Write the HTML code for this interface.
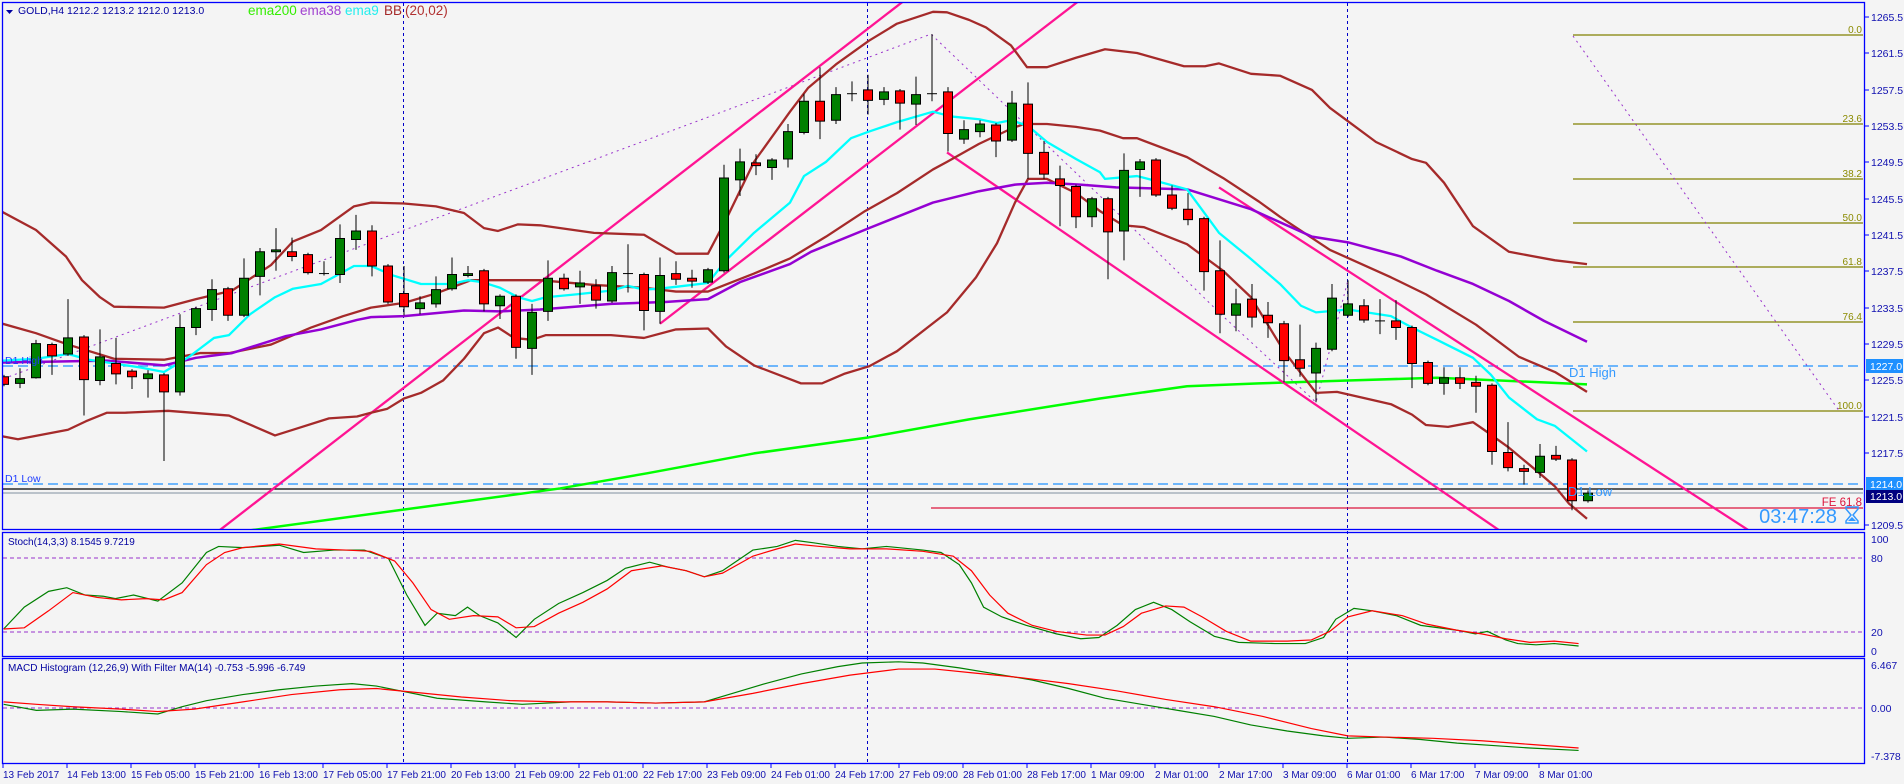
<!DOCTYPE html>
<html><head><meta charset="utf-8"><style>
html,body{margin:0;padding:0;background:#f4f4f4;}
svg{display:block;font-family:"Liberation Sans",sans-serif;}
</style></head><body>
<svg width="1904" height="784" viewBox="0 0 1904 784" xmlns="http://www.w3.org/2000/svg">
<defs>
<clipPath id="cm"><rect x="3" y="3" width="1860" height="526"/></clipPath>
<clipPath id="cs"><rect x="3" y="533" width="1860" height="122"/></clipPath>
<clipPath id="cd"><rect x="3" y="659" width="1860" height="103"/></clipPath>
</defs>
<rect width="1904" height="784" fill="#f4f4f4"/>

<!-- vertical dashed lines -->
<g stroke="#0000c8" stroke-width="1" stroke-dasharray="3,3">
<line x1="403.5" y1="3" x2="403.5" y2="763"/>
<line x1="867.5" y1="3" x2="867.5" y2="763"/>
<line x1="1347.5" y1="3" x2="1347.5" y2="763"/>
</g>

<g clip-path="url(#cm)">
<!-- fib levels -->
<g stroke="#808000" stroke-width="1.3">
<line x1="1573" y1="35" x2="1864" y2="35"/>
<line x1="1573" y1="124" x2="1864" y2="124"/>
<line x1="1573" y1="179" x2="1864" y2="179"/>
<line x1="1573" y1="223" x2="1864" y2="223"/>
<line x1="1573" y1="267" x2="1864" y2="267"/>
<line x1="1573" y1="322" x2="1864" y2="322"/>
<line x1="1573" y1="411" x2="1864" y2="411"/>
</g>
<g fill="#8b8b00" font-size="10" text-anchor="end">
<text x="1862" y="33">0.0</text><text x="1862" y="122">23.6</text><text x="1862" y="177">38.2</text>
<text x="1862" y="221">50.0</text><text x="1862" y="265">61.8</text><text x="1862" y="320">76.4</text><text x="1862" y="409">100.0</text>
</g>
<line x1="1573" y1="36" x2="1840" y2="412" stroke="#9932cc" stroke-width="1" stroke-dasharray="2,4"/>

<!-- horizontal lines -->
<line x1="3" y1="366" x2="1864" y2="366" stroke="#1e90ff" stroke-width="1.3" stroke-dasharray="10,5"/>
<line x1="3" y1="484" x2="1864" y2="484" stroke="#1e90ff" stroke-width="1.3" stroke-dasharray="10,5"/>
<line x1="3" y1="489" x2="1864" y2="489" stroke="#000" stroke-width="1.3"/>
<line x1="3" y1="493" x2="1864" y2="493" stroke="#8090a0" stroke-width="1"/>
<line x1="931" y1="508" x2="1864" y2="508" stroke="#dc143c" stroke-width="1.3"/>

<g transform="scale(1,0.9466)" fill="none" stroke-linejoin="round">
<!-- dotted trend -->
<polyline vector-effect="non-scaling-stroke" stroke="#9932cc" stroke-width="1" stroke-dasharray="2,4" points="3.6,400 560,182 931,36 1100,207 1223,334 1316,425 1348,296"/>
<!-- ema200 -->
<polyline vector-effect="non-scaling-stroke" stroke="#00ff00" stroke-width="2.5" points="220,566 252,560 560,516 647,500 754,479 869,462 969,443 1100,421 1187,408 1259,405 1348,402 1437,399 1587,406"/>
<!-- channels -->
<g stroke="#ff1493" stroke-width="2.3">
<line vector-effect="non-scaling-stroke" x1="210" y1="568" x2="905" y2="0"/>
<line vector-effect="non-scaling-stroke" x1="660" y1="342" x2="1080" y2="0"/>
<line vector-effect="non-scaling-stroke" x1="947" y1="161" x2="1510" y2="568"/>
<line vector-effect="non-scaling-stroke" x1="1219" y1="198" x2="1760" y2="568"/>
</g>
<!-- BB -->
<g stroke="#a52a2a" stroke-width="2.3">
<polyline vector-effect="non-scaling-stroke" points="2.5,224 36,243 66,271 82,296 100,314 114,324 164,325 196,316 232,307 271,280 293,255 321,243 354,218 371,214 404,215 436,218 464,225 484,241 498,244 518,237 540,238 594,246 644,248 676,268 708,268 726,232 754,171 790,118 808,93 836,68 869,43 897,25 933,12.5 947,13 969,21 986,29 1011,48 1027,71 1047,71 1076,61 1105,52 1137,56 1184,70 1205,70 1219,67 1251,78 1280,80 1312,95 1330,114 1376,150 1412,168 1426,172 1444,193 1473,239 1509,266 1555,275 1587,279"/>
<polyline vector-effect="non-scaling-stroke" points="2.5,342 36,352 68,364 114,379 164,380 200,373 229,373 271,364 311,346 343,334 371,325 404,320 436,310 471,296 540,296 594,301 644,304 676,308 708,308 754,289 790,273 826,250 865,223 897,204 933,179 947,171 979,152 1011,136 1024,131 1047,131 1076,134 1100,138 1123,146 1137,146 1187,166 1223,188 1259,213 1280,229 1330,264 1391,293 1426,311 1476,343 1519,377 1555,393 1587,414"/>
<polyline vector-effect="non-scaling-stroke" points="2.5,461 18,464 68,454 86,445 107,436 125,436 168,434 229,439 275,460 296,453 329,442 357,440 371,436 387,432 404,421 421,415 443,402 464,379 484,352 498,346 514,357 532,359 546,354 560,354 611,354 644,357 676,348 708,347 726,366 754,386 801,405 822,405 844,395 869,387 897,371 947,330 976,293 997,257 1015,214 1028,189 1047,189 1076,204 1100,223 1123,238 1144,240 1187,258 1223,286 1251,314 1284,371 1316,415 1337,414 1366,421 1391,427 1412,438 1426,449 1448,451 1473,446 1484,454 1509,473 1534,495 1555,514 1569,532 1587,548"/>
</g>
<!-- ema38 -->
<polyline vector-effect="non-scaling-stroke" stroke="#9400d3" stroke-width="2.5" points="2.5,383 107,381 164,386 196,378 232,373 286,355 321,348 357,338 371,335 404,334 464,328 500,329 540,327 611,321 665,319 708,316 740,298 790,279 811,266 869,241 933,214 979,202 1015,195 1047,193 1080,195 1116,198 1187,200 1251,221 1312,250 1348,256 1401,271 1437,286 1473,300 1509,318 1544,339 1587,361"/>
<!-- ema9 -->
<polyline vector-effect="non-scaling-stroke" stroke="#00ffff" stroke-width="2.3" points="2.5,381 36,379 68,374 89,380 114,384 139,388 164,393 189,377 214,357 229,354 250,332 275,314 293,305 321,300 354,281 371,281 393,291 421,300 451,300 468,296 482,298 500,304 518,314 532,318 546,314 576,311 611,307 628,302 644,306 658,305 676,303 708,299 726,275 754,246 790,214 804,186 826,171 851,146 869,139 897,129 933,118 951,123 979,126 997,130 1011,127 1028,133 1047,150 1076,168 1100,182 1105,189 1137,186 1159,192 1187,200 1219,246 1248,271 1280,300 1301,323 1316,330 1348,327 1391,334 1412,346 1437,359 1473,378 1491,396 1509,420 1537,443 1555,450 1587,477"/>
</g>

<!-- candles -->
<g id="candles" stroke="#000" stroke-width="1" transform="scale(1,0.9466)">
</g>
</g>

<!-- labels in main -->
<g font-size="10.5" fill="#1e3cff">
<text x="5" y="364">D1 High</text><text x="5" y="482">D1 Low</text>
</g>
<g font-size="13" fill="#3399ff">
<text x="1569" y="377">D1 High</text><text x="1568" y="496">D1 Low</text>
</g>
<text x="1862" y="506" font-size="11.5" fill="#dc143c" text-anchor="end">FE 61.8</text>
<text x="1837" y="523" font-size="20" fill="#3399ff" text-anchor="end">03:47:28</text>
<g fill="#3399ff"><path d="M1846,507 h12 v2 l-5,6 5,6 v2 h-12 v-2 l5,-6 -5,-6z" fill="none" stroke="#3399ff" stroke-width="1.5"/><path d="M1848,521 h8 l-4,-4z"/></g>

<!-- header -->
<path d="M6,10 h7 l-3.5,4z" fill="#0000a0"/>
<text x="18" y="14" font-size="10.5" fill="#0000a0">GOLD,H4  1212.2 1213.2 1212.0 1213.0</text>
<g font-size="13.5"><text x="248" y="15" fill="#33ee00">ema200</text><text x="300" y="15" fill="#a040d0">ema38</text><text x="345" y="15" fill="#22eeee">ema9</text><text x="384" y="15" fill="#a52a2a">BB</text><text x="405" y="15" fill="#b03030">(20,02)</text></g>

<!-- Stoch -->
<g clip-path="url(#cs)">
<line x1="3" y1="558" x2="1864" y2="558" stroke="#9932cc" stroke-dasharray="4,3"/>
<line x1="3" y1="632" x2="1864" y2="632" stroke="#9932cc" stroke-dasharray="4,3"/>
<g transform="scale(1.2143)" fill="none" stroke-width="1.2">
<polyline vector-effect="non-scaling-stroke" stroke="#008000" points="3,518 20,500 40,487 55,484 70,490 85,491 95,493 110,490 130,495 150,480 170,455 180,450 200,451 230,449 250,455 275,453 300,453 320,460 335,490 350,515 360,505 375,507 385,500 395,507 410,513 425,525 440,510 460,497 480,488 500,478 515,468 535,463 550,467 565,470 580,475 595,470 620,453 640,450 655,445 670,447 690,450 710,452 730,450 760,453 775,455 790,465 800,480 810,500 825,508 845,515 870,522 890,526 905,525 920,515 935,502 950,496 965,502 980,512 1000,524 1020,529 1050,530 1075,530 1090,525 1100,510 1115,501 1130,503 1150,507 1170,515 1200,519 1215,522 1225,520 1240,527 1250,530 1265,531 1280,530 1300,532"/>
<polyline vector-effect="non-scaling-stroke" stroke="#ff0000" points="3,518 20,517 40,503 60,488 80,492 100,494 120,493 135,494 150,488 170,465 185,455 200,451 230,448 260,452 285,453 305,454 325,462 340,480 355,502 370,510 390,507 410,508 425,517 440,516 460,505 480,496 500,485 520,470 545,466 565,470 580,475 595,472 620,458 640,452 655,448 675,450 700,452 730,452 760,454 785,458 800,470 815,490 830,505 850,515 870,520 895,523 910,523 925,516 940,505 960,499 975,500 990,508 1010,520 1030,528 1060,528 1080,527 1095,520 1110,508 1130,503 1155,507 1175,514 1200,519 1220,522 1240,526 1260,529 1280,528 1300,530"/>
</g>
</g>
<text x="8" y="545" font-size="10" fill="#0000a0">Stoch(14,3,3) 8.1545 9.7219</text>

<!-- MACD -->
<g clip-path="url(#cd)">
<line x1="3" y1="708" x2="1864" y2="708" stroke="#9932cc" stroke-dasharray="4,3"/>
<g transform="scale(1.2143)" fill="none" stroke-width="1.2">
<polyline vector-effect="non-scaling-stroke" stroke="#008000" points="3,580 30,585 60,584 100,586 130,588 150,582 170,577 200,572 230,568 260,565 290,563 310,565 330,569 360,575 400,578 430,580 470,578 500,578 540,579 580,578 600,572 630,563 660,555 690,549 710,546 740,545 760,546 790,550 820,555 850,560 880,567 910,575 940,580 970,585 1000,590 1030,597 1060,602 1090,606 1110,608 1140,607 1170,609 1200,612 1230,614 1260,616 1300,618"/>
<polyline vector-effect="non-scaling-stroke" stroke="#ff0000" points="3,578 30,580 60,582 100,584 130,586 160,584 200,578 240,572 280,568 310,567 340,570 380,574 420,577 460,578 500,578 540,579 580,578 620,571 660,563 700,556 740,551 770,551 800,554 840,558 880,563 920,569 960,576 1000,582 1040,590 1080,600 1110,606 1140,607 1180,608 1220,610 1260,613 1300,616"/>
</g>
</g>
<text x="8" y="671" font-size="10" fill="#0000a0">MACD Histogram (12,26,9) With Filter MA(14) -0.753 -5.996 -6.749</text>

<!-- panel borders -->
<g fill="none" stroke="#0000ff" stroke-width="1.3">
<rect x="2.5" y="2.5" width="1862" height="527"/>
<rect x="2.5" y="532.5" width="1862" height="124"/>
<rect x="2.5" y="658.5" width="1862" height="105"/>
</g>

<!-- right axis -->
<g font-size="10.5" fill="#1010b0">
<text x="1871" y="21">1265.5</text><text x="1871" y="57">1261.5</text><text x="1871" y="94">1257.5</text><text x="1871" y="130">1253.5</text>
<text x="1871" y="166">1249.5</text><text x="1871" y="203">1245.5</text><text x="1871" y="239">1241.5</text><text x="1871" y="275">1237.5</text>
<text x="1871" y="312">1233.5</text><text x="1871" y="348">1229.5</text><text x="1871" y="384">1225.5</text><text x="1871" y="421">1221.5</text>
<text x="1871" y="457">1217.5</text><text x="1871" y="529">1209.5</text>
<text x="1871" y="543">100</text><text x="1871" y="562">80</text><text x="1871" y="636">20</text><text x="1871" y="655">0</text>
<text x="1871" y="669">6.467</text><text x="1871" y="712">0.00</text><text x="1871" y="760">-7.378</text>
</g>
<g stroke="#0000ff"><path d="M1865,17h4M1865,53h4M1865,90h4M1865,126h4M1865,162h4M1865,199h4M1865,235h4M1865,271h4M1865,308h4M1865,344h4M1865,380h4M1865,417h4M1865,453h4M1865,525h4"/></g>
<rect x="1866" y="359" width="37" height="14" fill="#1e90ff"/><text x="1870" y="370" font-size="10.5" fill="#fff">1227.0</text>
<rect x="1866" y="477" width="37" height="13" fill="#1e90ff"/><text x="1870" y="488" font-size="10.5" fill="#fff">1214.0</text>
<rect x="1866" y="490" width="37" height="13" fill="#000080"/><text x="1870" y="500" font-size="10.5" fill="#fff">1213.0</text>

<!-- time axis -->
<g font-size="10" fill="#1010b0">
<text x="3" y="778">13 Feb 2017</text><text x="67" y="778">14 Feb 13:00</text><text x="131" y="778">15 Feb 05:00</text><text x="195" y="778">15 Feb 21:00</text>
<text x="259" y="778">16 Feb 13:00</text><text x="323" y="778">17 Feb 05:00</text><text x="387" y="778">17 Feb 21:00</text><text x="451" y="778">20 Feb 13:00</text>
<text x="515" y="778">21 Feb 09:00</text><text x="579" y="778">22 Feb 01:00</text><text x="643" y="778">22 Feb 17:00</text><text x="707" y="778">23 Feb 09:00</text>
<text x="771" y="778">24 Feb 01:00</text><text x="835" y="778">24 Feb 17:00</text><text x="899" y="778">27 Feb 09:00</text><text x="963" y="778">28 Feb 01:00</text>
<text x="1027" y="778">28 Feb 17:00</text><text x="1091" y="778">1 Mar 09:00</text><text x="1155" y="778">2 Mar 01:00</text><text x="1219" y="778">2 Mar 17:00</text>
<text x="1283" y="778">3 Mar 09:00</text><text x="1347" y="778">6 Mar 01:00</text><text x="1411" y="778">6 Mar 17:00</text><text x="1475" y="778">7 Mar 09:00</text><text x="1539" y="778">8 Mar 01:00</text>
</g>
<g stroke="#0000ff"><path d="M3,764v4M67,764v4M131,764v4M195,764v4M259,764v4M323,764v4M387,764v4M451,764v4M515,764v4M579,764v4M643,764v4M707,764v4M771,764v4M835,764v4M899,764v4M963,764v4M1027,764v4M1091,764v4M1155,764v4M1219,764v4M1283,764v4M1347,764v4M1411,764v4M1475,764v4M1539,764v4"/></g>
</svg>
<script>
var d=[[398,406,0,396,408],[400,405,1,389,410],[363,399,1,359,400],[364,376,0,362,396],[357,374,1,316,376],[356,401,0,354,439],[377,402,1,348,407],[384,395,0,357,406],[392,398,0,390,411],[395,400,1,391,420],[396,414,0,394,487],[346,414,1,332,418],[326,346,1,324,354],[306,327,1,295,339],[305,333,0,303,339],[294,333,1,273,335],[266,292,1,262,312],[264,266,1,241,286],[266,271,0,251,276],[269,288,0,267,290],[289,289.5,1,276,291],[252,290,1,237,299],[244,253,1,227,264],[244,281,0,238,292],[281,319,0,279,321],[310,324,0,281,333],[320,326,1,313,332],[306,321,1,292,325],[290,305,1,272,307],[289,291,1,281,293],[286,321,0,284,329],[313,323,1,311,337],[313,367,0,311,379],[330,368,1,321,396],[294,329,1,275,339],[294,305,0,289,307],[299,303,1,286,321],[302,317,0,295,326],[288,318,1,281,320],[289,289.5,1,258,309],[290,328,0,288,349],[291,329,1,272,342],[289,295,0,276,301],[294,297,0,285,304],[285,298,1,283,300],[188,286,1,174,288],[171,190,1,157,207],[172,175,0,163,185],[169,177,1,167,190],[139,168,1,131,177],[107,140,1,99,142],[107,128,0,71,147],[100,127,1,92,131],[99,99.5,1,86,107],[95,106,0,79,121],[97,105,1,92,111],[96,109,0,94,137],[100,110,1,81,132],[99,99.5,1,36,107],[97,141,0,92,160],[137,147,1,127,152],[131,139,1,127,145],[132,149,0,130,166],[109,148,1,96,150],[110,162,0,87,189],[161,184,0,149,189],[189,196,0,175,239],[197,229,0,195,241],[210,229,1,208,240],[210,245,0,208,295],[180,244,1,162,275],[171,179,1,168,208],[169,206,0,167,208],[206,220,0,196,222],[221,232,0,204,238],[231,287,0,229,307],[286,332,0,254,352],[321,333,1,305,350],[316,335,0,300,346],[333,341,0,319,357],[342,381,0,339,404],[380,389,0,343,398],[368,394,1,362,425],[315,369,1,300,371],[321,333,1,296,335],[323,338,0,316,341],[339,339.5,1,316,353],[339,346,0,317,359],[346,384,0,344,410],[383,405,0,381,407],[399,405,1,388,417],[399,405,0,388,411],[404,408,0,397,436],[407,477,0,405,491],[478,494,0,446,498],[495,498,0,491,512],[482,499,1,469,505],[481,485,0,471,487],[486,529,0,484,539],[521,529,1,518,531]];
var g=document.getElementById('candles'),s='',ns='http://www.w3.org/2000/svg';
for(var i=0;i<d.length;i++){var c=d[i],x=4+16*i;
s+='<line vector-effect="non-scaling-stroke" x1="'+x+'" x2="'+x+'" y1="'+c[3]+'" y2="'+c[4]+'"/>';
var h=c[1]-c[0];if(h<1.2){s+='<line vector-effect="non-scaling-stroke" x1="'+(x-5)+'" x2="'+(x+5)+'" y1="'+c[0]+'" y2="'+c[0]+'"/>';}
else s+='<rect vector-effect="non-scaling-stroke" x="'+(x-4.5)+'" width="9" y="'+c[0]+'" height="'+h+'" fill="'+(c[2]?'#008000':'#ff0000')+'"/>';}
g.innerHTML=s;
</script>
</body></html>
